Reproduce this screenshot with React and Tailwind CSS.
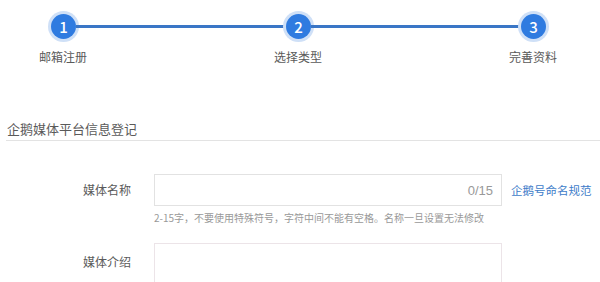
import React from 'react';

const steps = [
  { n: 1, label: '邮箱注册' },
  { n: 2, label: '选择类型' },
  { n: 3, label: '完善资料' },
];

const StepCircle = ({ n }) => (
  <div className="w-[25px] h-[25px] rounded-full bg-[#2f7be0] ring-[3px] ring-[#cfe0f7] flex items-center justify-center text-white text-[15px] leading-none font-medium shrink-0">
    {n}
  </div>
);

const App = () => {
  return (
    <div
      className="w-[600px] h-[282px] overflow-hidden bg-white"
      style={{ fontFamily: '"Noto Sans CJK SC", "Noto Sans", sans-serif' }}
    >
      {/* Steps */}
      <div className="pt-[14px] pl-[51px] w-[546px] flex items-center">
        <StepCircle n={1} />
        <div className="flex-1 h-[3px] bg-[#3a76c6]"></div>
        <StepCircle n={2} />
        <div className="flex-1 h-[3px] bg-[#3a76c6]"></div>
        <StepCircle n={3} />
      </div>
      <div className="mt-[10px] ml-[33px] w-[530px] flex justify-between">
        {steps.map(s => (
          <div key={s.n} className="w-[60px] text-center text-[12px] leading-[16px] text-[#5a5a5a]">
            {s.label}
          </div>
        ))}
      </div>

      {/* Section heading */}
      <div className="mt-[55px] ml-[6px] pb-[2px] border-b border-[#e3e3e3]">
        <h2 className="pl-[1px] text-[13px] leading-[18px] text-[#5a5a5a] font-normal">企鹅媒体平台信息登记</h2>
      </div>

      {/* Media name */}
      <div className="mt-[33px] flex items-center">
        <label className="w-[131px] text-right text-[12px] leading-[16px] text-[#5a5a5a]">媒体名称</label>
        <div className="ml-[23px] w-[348px] h-[32px] border border-[#e2e2e2] flex items-center justify-end pr-[8px]">
          <span className="text-[13px] text-[#999] leading-none" style={{ fontFamily: '"Liberation Sans", sans-serif' }}>0/15</span>
        </div>
        <a className="ml-[9px] text-[11.5px] leading-[16px] text-[#3d7cc9]">企鹅号命名规范</a>
      </div>
      <p className="mt-[5px] ml-[154px] text-[10px] leading-[14px] text-[#999]">
        2-15字，不要使用特殊符号，字符中间不能有空格。名称一旦设置无法修改
      </p>

      {/* Media intro */}
      <div className="mt-[18px] flex items-start">
        <label className="w-[131px] pt-[11px] text-right text-[12px] leading-[16px] text-[#5a5a5a]">媒体介绍</label>
        <div className="ml-[23px] w-[348px] h-[80px] border border-[#ece4e8]"></div>
      </div>
    </div>
  );
};

export default App;
